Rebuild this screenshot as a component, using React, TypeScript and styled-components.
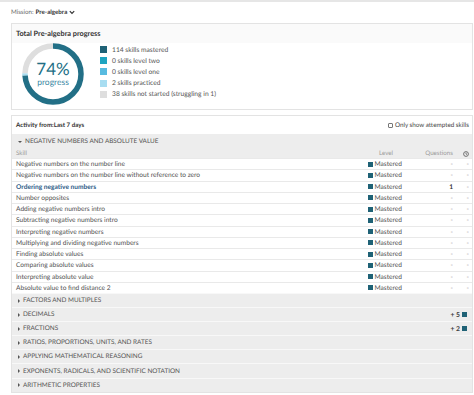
import React from 'react';
import styled, { createGlobalStyle } from 'styled-components';

const colors = {
  text: '#505050',
  dark: '#333',
  muted: '#9a9a9a',
  border: '#e3e3e3',
  rowLine: '#e9e9e9',
  band: '#ededed',
  mastered: '#1f6276',
  levelTwo: '#1ea4c0',
  levelOne: '#58bbe0',
  practiced: '#a8ddf1',
  notStarted: '#dedede',
  ring: '#226f86',
  link: '#2d5b87'
};

const GlobalStyle = createGlobalStyle`
  html, body {
    margin: 0;
    padding: 0;
    background: #fff;
  }
  body {
    font-family: Lato, 'Open Sans', Arial, sans-serif;
    color: ${colors.text};
    font-size: 7px;
    text-rendering: geometricPrecision;
  }
  * { box-sizing: border-box; }
`;

const TopBar = styled.div`
  height: 2px;
  background: #e6e6e6;
`;

const Page = styled.div`
  padding: 0 1px 0 11px;
`;

const MissionRow = styled.div`
  height: 21px;
  display: flex;
  align-items: center;
  gap: 2px;
  font-size: 6.2px;
  color: #666;

  b {
    color: ${colors.dark};
    font-weight: 700;
  }
`;

const Card = styled.div<{ $gap?: number }>`
  border: 1px solid ${colors.border};
  background: #fff;
  margin-bottom: ${(p) => p.$gap ?? 0}px;
`;

const CardTitle = styled.div`
  height: 19px;
  display: flex;
  align-items: center;
  padding-left: 4px;
  background: #fafafa;
  font-weight: 700;
  color: ${colors.dark};
  font-size: 7.3px;
`;

const ProgressBody = styled.div`
  display: flex;
  padding: 0 0 4px 10px;
`;

const DonutWrap = styled.div`
  position: relative;
  width: 62px;
  height: 62px;
  display: flex;
  flex-direction: column;
  align-items: center;
  justify-content: center;

  svg {
    position: absolute;
    inset: 0;
  }
`;

const Percent = styled.div`
  font-size: 17px;
  line-height: 15px;
  color: ${colors.ring};
`;

const PercentLabel = styled.div`
  font-size: 8.5px;
  line-height: 10px;
  margin-top: 1px;
  color: #3a88a3;
`;

const Legend = styled.div`
  display: flex;
  flex-direction: column;
  margin-left: 16px;
  padding-top: 1px;
`;

const LegendRow = styled.div`
  height: 11.2px;
  display: flex;
  align-items: center;
  gap: 5px;
  font-size: 6.7px;
  color: #555;
`;

const Swatch = styled.span<{ $color: string; $size?: number }>`
  display: inline-block;
  flex: none;
  width: ${(p) => p.$size ?? 7}px;
  height: ${(p) => p.$size ?? 7}px;
  background: ${(p) => p.$color};
`;

const ActivityHeader = styled.div`
  height: 18px;
  display: flex;
  align-items: center;
  justify-content: space-between;
  padding: 0 3px 0 4px;
  font-size: 6.2px;

  b {
    color: ${colors.dark};
  }
`;

const CheckLabel = styled.label`
  display: flex;
  align-items: center;
  gap: 1.5px;
  font-size: 6.3px;
  color: #444;
`;

const CheckBox = styled.span`
  width: 5px;
  height: 5px;
  border: 0.8px solid #777;
  border-radius: 1px;
  display: inline-block;
`;

const SectionHead = styled.div<{ $open?: boolean }>`
  height: ${(p) => (p.$open ? 15 : 14.1)}px;
  display: flex;
  align-items: center;
  padding: 0 5px 0 5px;
  background: ${colors.band};
  border-top: ${(p) => (p.$open ? 'none' : '1px solid #f8f8f8')};
  font-size: 6.4px;
  color: #555;
  text-transform: uppercase;
`;

const Caret = styled.span<{ $open?: boolean }>`
  width: 0;
  height: 0;
  margin-right: 3px;
  border-style: solid;
  ${(p) =>
    p.$open
      ? `border-width: 2.5px 2px 0 2px; border-color: #555 transparent transparent transparent; margin-left: 1px;`
      : `border-width: 2px 0 2px 2.5px; border-color: transparent transparent transparent #555; margin-left: 1px;`}
`;

const SectionTitle = styled.span`
  flex: 1;
`;

const Gain = styled.span`
  display: flex;
  align-items: center;
  gap: 2px;
  font-weight: 700;
  color: #3c3c3c;
  font-size: 6.8px;
`;

const Grid = styled.div<{ $head?: boolean }>`
  display: grid;
  grid-template-columns: 1fr 46px 43px 17px;
  align-items: center;
  height: ${(p) => (p.$head ? 9 : 11.25)}px;
  background: ${(p) => (p.$head ? colors.band : '#fff')};
  border-top: ${(p) => (p.$head ? 'none' : `1px solid ${colors.rowLine}`)};
  font-size: ${(p) => (p.$head ? 6.2 : 6.6)}px;
  color: ${(p) => (p.$head ? colors.muted : colors.text)};
`;

const SkillCell = styled.span<{ $strong?: boolean }>`
  padding-left: 4px;
  white-space: nowrap;
  font-weight: ${(p) => (p.$strong ? 700 : 400)};
  color: ${(p) => (p.$strong ? colors.link : 'inherit')};
`;

const LevelCell = styled.span<{ $head?: boolean }>`
  display: flex;
  align-items: center;
  gap: 1.5px;
  padding-left: ${(p) => (p.$head ? 13 : 2)}px;
`;

const NumCell = styled.span<{ $strong?: boolean; $pad?: number; $muted?: boolean }>`
  text-align: right;
  padding-right: ${(p) => p.$pad ?? 2}px;
  font-weight: ${(p) => (p.$strong ? 700 : 400)};
  color: ${(p) => (p.$strong ? colors.dark : p.$muted ? colors.muted : '#8a8a8a')};
  display: flex;
  justify-content: flex-end;
`;

const ChevronDown = () => (
  <svg width="6" height="5" viewBox="0 0 6 5">
    <path d="M0.8 1.2 L3 3.5 L5.2 1.2" fill="none" stroke="#333" strokeWidth="1.2" />
  </svg>
);

const ClockIcon = () => (
  <svg width="6" height="6" viewBox="0 0 6 6">
    <circle cx="3" cy="3" r="2.4" fill="none" stroke="#555" strokeWidth="0.8" />
    <path d="M3 1.6 V3 L4 3.6" fill="none" stroke="#555" strokeWidth="0.7" />
  </svg>
);

const Donut = () => {
  const r = 28;
  const c = 2 * Math.PI * r;
  const total = 154;
  const parts = [
    { v: 114, color: colors.ring },
    { v: 2, color: colors.practiced },
    { v: 38, color: colors.notStarted }
  ];
  let offset = 0;
  return (
    <svg width="62" height="62" viewBox="0 0 62 62">
      <g transform="rotate(-90 31 31)">
        {parts.map((p, i) => {
          const len = (p.v / total) * c;
          const el = (
            <circle
              key={i}
              cx="31"
              cy="31"
              r={r}
              fill="none"
              stroke={p.color}
              strokeWidth="5.5"
              strokeDasharray={`${len} ${c - len}`}
              strokeDashoffset={-offset}
            />
          );
          offset += len;
          return el;
        })}
      </g>
    </svg>
  );
};

const legend = [
  { color: colors.mastered, label: '114 skills mastered' },
  { color: colors.levelTwo, label: '0 skills level two' },
  { color: colors.levelOne, label: '0 skills level one' },
  { color: colors.practiced, label: '2 skills practiced' },
  { color: colors.notStarted, label: '38 skills not started (struggling in 1)' }
];

const skills = [
  { name: 'Negative numbers on the number line' },
  { name: 'Negative numbers on the number line without reference to zero' },
  { name: 'Ordering negative numbers', strong: true, q: '1' },
  { name: 'Number opposites' },
  { name: 'Adding negative numbers intro' },
  { name: 'Subtracting negative numbers intro' },
  { name: 'Interpreting negative numbers' },
  { name: 'Multiplying and dividing negative numbers' },
  { name: 'Finding absolute values' },
  { name: 'Comparing absolute values' },
  { name: 'Interpreting absolute value' },
  { name: 'Absolute value to find distance 2' }
];

const sections = [
  { title: 'Factors and multiples' },
  { title: 'Decimals', gain: '+ 5' },
  { title: 'Fractions', gain: '+ 2' },
  { title: 'Ratios, proportions, units, and rates' },
  { title: 'Applying mathematical reasoning' },
  { title: 'Exponents, radicals, and scientific notation' },
  { title: 'Arithmetic properties' }
];

const App: React.FC = () => {
  return (
    <>
      <GlobalStyle />
      <TopBar />
      <Page>
        <MissionRow>
          Mission: <b>Pre-algebra</b>
          <ChevronDown />
        </MissionRow>

        <Card $gap={5}>
          <CardTitle>Total Pre-algebra progress</CardTitle>
          <ProgressBody>
            <DonutWrap>
              <Donut />
              <Percent>74%</Percent>
              <PercentLabel>progress</PercentLabel>
            </DonutWrap>
            <Legend>
              {legend.map((l) => (
                <LegendRow key={l.label}>
                  <Swatch $color={l.color} />
                  {l.label}
                </LegendRow>
              ))}
            </Legend>
          </ProgressBody>
        </Card>

        <Card>
          <ActivityHeader>
            <b>Activity from:Last 7 days</b>
            <CheckLabel>
              <CheckBox />
              Only show attempted skills
            </CheckLabel>
          </ActivityHeader>

          <SectionHead $open>
            <Caret $open />
            <SectionTitle>Negative numbers and absolute value</SectionTitle>
          </SectionHead>
          <Grid $head>
            <SkillCell>Skill</SkillCell>
            <LevelCell $head>Level</LevelCell>
            <NumCell $muted>Questions</NumCell>
            <NumCell $pad={3}>
              <ClockIcon />
            </NumCell>
          </Grid>
          {skills.map((s) => (
            <Grid key={s.name}>
              <SkillCell $strong={s.strong}>{s.name}</SkillCell>
              <LevelCell>
                <Swatch $color={colors.mastered} $size={5} />
                Mastered
              </LevelCell>
              <NumCell $strong={!!s.q}>{s.q ?? '-'}</NumCell>
              <NumCell $pad={3}>-</NumCell>
            </Grid>
          ))}

          {sections.map((s) => (
            <SectionHead key={s.title}>
              <Caret />
              <SectionTitle>{s.title}</SectionTitle>
              {s.gain && (
                <Gain>
                  {s.gain}
                  <Swatch $color={colors.mastered} $size={5} />
                </Gain>
              )}
            </SectionHead>
          ))}
        </Card>
      </Page>
    </>
  );
};

export default App;
